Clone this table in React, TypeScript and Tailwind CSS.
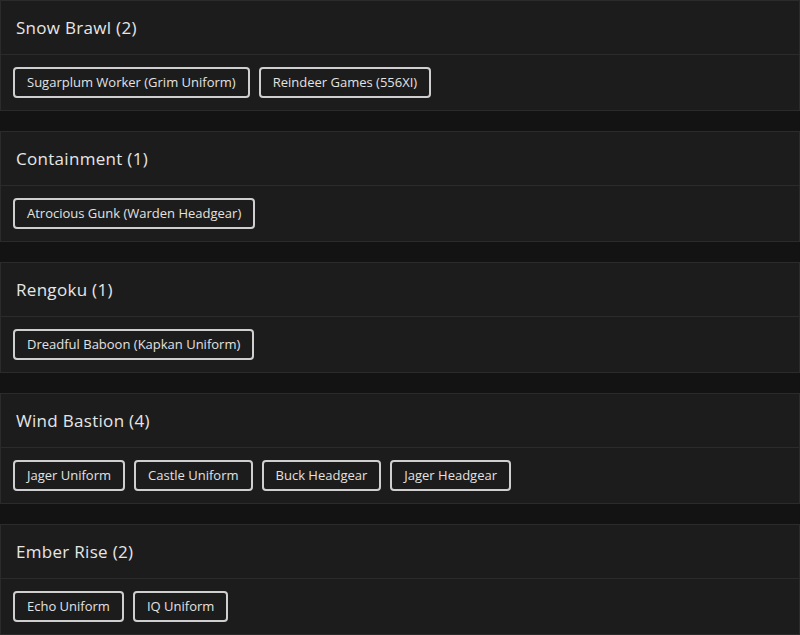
import React from "react";

const groups: { title: string; items: string[] }[] = [
  { title: "Snow Brawl (2)", items: ["Sugarplum Worker (Grim Uniform)", "Reindeer Games (556XI)"] },
  { title: "Containment (1)", items: ["Atrocious Gunk (Warden Headgear)"] },
  { title: "Rengoku (1)", items: ["Dreadful Baboon (Kapkan Uniform)"] },
  { title: "Wind Bastion (4)", items: ["Jager Uniform", "Castle Uniform", "Buck Headgear", "Jager Headgear"] },
  { title: "Ember Rise (2)", items: ["Echo Uniform", "IQ Uniform"] },
];

export default function App() {
  return (
    <div
      className="w-[800px] h-[635px] overflow-hidden bg-[#131313] flex flex-col gap-[20px]"
      style={{ fontFamily: '"Open Sans", "Noto Sans", sans-serif' }}
    >
      {groups.map((g) => (
        <div key={g.title} className="shrink-0 border border-[#2b2b2b] bg-[#1c1c1c]">
          <div className="h-[54px] flex items-center px-[15px] border-b border-[#2b2b2b]">
            <span className="text-[17px] text-[#e6e6e6] tracking-[0.3px]">{g.title}</span>
          </div>
          <div className="h-[55px] flex items-center gap-[9px] px-[12px]">
            {g.items.map((it) => (
              <div
                key={it}
                className="h-[31px] flex items-center px-[12px] border-2 border-[#cfcfcf] rounded-[4px] text-[13px] text-[#e2e2e2]"
              >
                {it}
              </div>
            ))}
          </div>
        </div>
      ))}
    </div>
  );
}
